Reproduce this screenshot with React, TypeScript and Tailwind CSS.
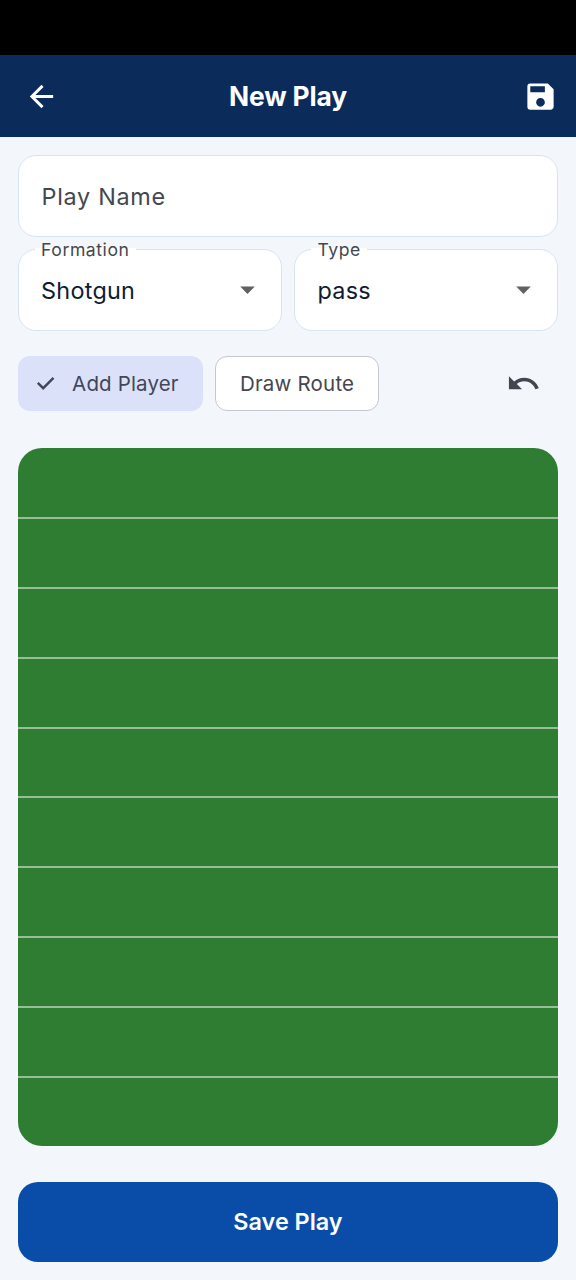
import { useState } from 'react';
import { MdArrowBack, MdArrowDropDown, MdSave, MdUndo } from 'react-icons/md';

const yardLines = [1, 2, 3, 4, 5, 6, 7, 8, 9];

const SelectField = ({ label, value }: { label: string; value: string }) => {
  return (
    <button className="relative flex h-[82px] flex-1 items-center justify-between rounded-[18px] border-[1.5px] border-[#d6e4f0] bg-white pr-[16.5px] pl-[22.5px] text-left">
      <span className="absolute -top-[13px] left-[16px] px-[6.5px] text-[17.6px] leading-[26px] tracking-[0.55px] text-[#45474e]">
        <span className="absolute inset-x-0 top-[11px] h-[4px] bg-white" />
        <span className="relative">{label}</span>
      </span>
      <span className="pt-[2px] text-[23.4px] leading-[34px] tracking-[0.25px] text-[#0f1b33]">{value}</span>
      <MdArrowDropDown className="size-[35px] text-[#616161]" />
    </button>
  );
};

const App = () => {
  const [mode, setMode] = useState('player');

  return (
    <div className="flex h-[1280px] w-[576px] flex-col bg-[#f3f7fc] font-['Inter',sans-serif]">
      <div className="h-[55px] shrink-0 bg-black" />
      <header className="grid h-[82px] shrink-0 grid-cols-[1fr_auto_1fr] items-center bg-[#0b2b5b] pr-[18px] pl-6 text-white">
        <button aria-label="Back">
          <MdArrowBack className="size-[35px]" />
        </button>
        <h1 className="mr-[6px] pt-px text-[26.4px] font-bold tracking-[-0.15px]">New Play</h1>
        <button aria-label="Save" className="justify-self-end">
          <MdSave className="size-[35px]" />
        </button>
      </header>

      <main className="flex flex-1 flex-col px-[17.6px] pt-[17.6px]">
        <input
          placeholder="Play Name"
          className="h-[82px] w-full rounded-[18px] border-[1.5px] border-[#d6e4f0] bg-white px-[23px] pt-[2px] text-[23.4px] tracking-[0.7px] outline-none placeholder:text-[#45474e]"
        />
        <div className="mt-3 flex gap-3">
          <SelectField label="Formation" value="Shotgun" />
          <SelectField label="Type" value="pass" />
        </div>

        <div className="mt-[25px] flex h-[55px] items-center">
          <button
            onClick={() => setMode('player')}
            className="flex h-[55px] w-[185.5px] items-center rounded-xl bg-[#dce1fa] pt-[2px] pl-4 text-[20.5px] tracking-[0.15px] text-[#424659]"
          >
            <svg viewBox="0 0 24 24" className="mr-[14.5px] size-6 fill-none stroke-current stroke-[2.4]">
              {mode === 'player' && <path d="M3.8 10.8 9.2 16.2 19.5 5.9" />}
            </svg>
            Add Player
          </button>
          <button
            onClick={() => setMode('route')}
            className="ml-3 h-[55px] w-[164px] rounded-xl border-[1.5px] border-[#c5c6d0] bg-white pt-[2px] text-[20.5px] tracking-[0.2px] text-[#45464f]"
          >
            Draw Route
          </button>
          <button aria-label="Undo" className="mr-[17.4px] ml-auto">
            <MdUndo className="size-[35px] text-[#44464f]" />
          </button>
        </div>

        <div className="mt-[37px] flex h-[698px] flex-col overflow-hidden rounded-[24px] bg-[#2e7d32] pt-[1.8px]">
          {yardLines.map((line) => (
            <div key={line} className="flex-1 border-b-2 border-white/50" />
          ))}
          <div className="h-[68px]" />
        </div>

        <button className="mt-9 h-[80px] rounded-[20px] bg-[#0a4da8] text-[23.4px] font-semibold text-white">
          Save Play
        </button>
      </main>
    </div>
  );
};

export default App;
